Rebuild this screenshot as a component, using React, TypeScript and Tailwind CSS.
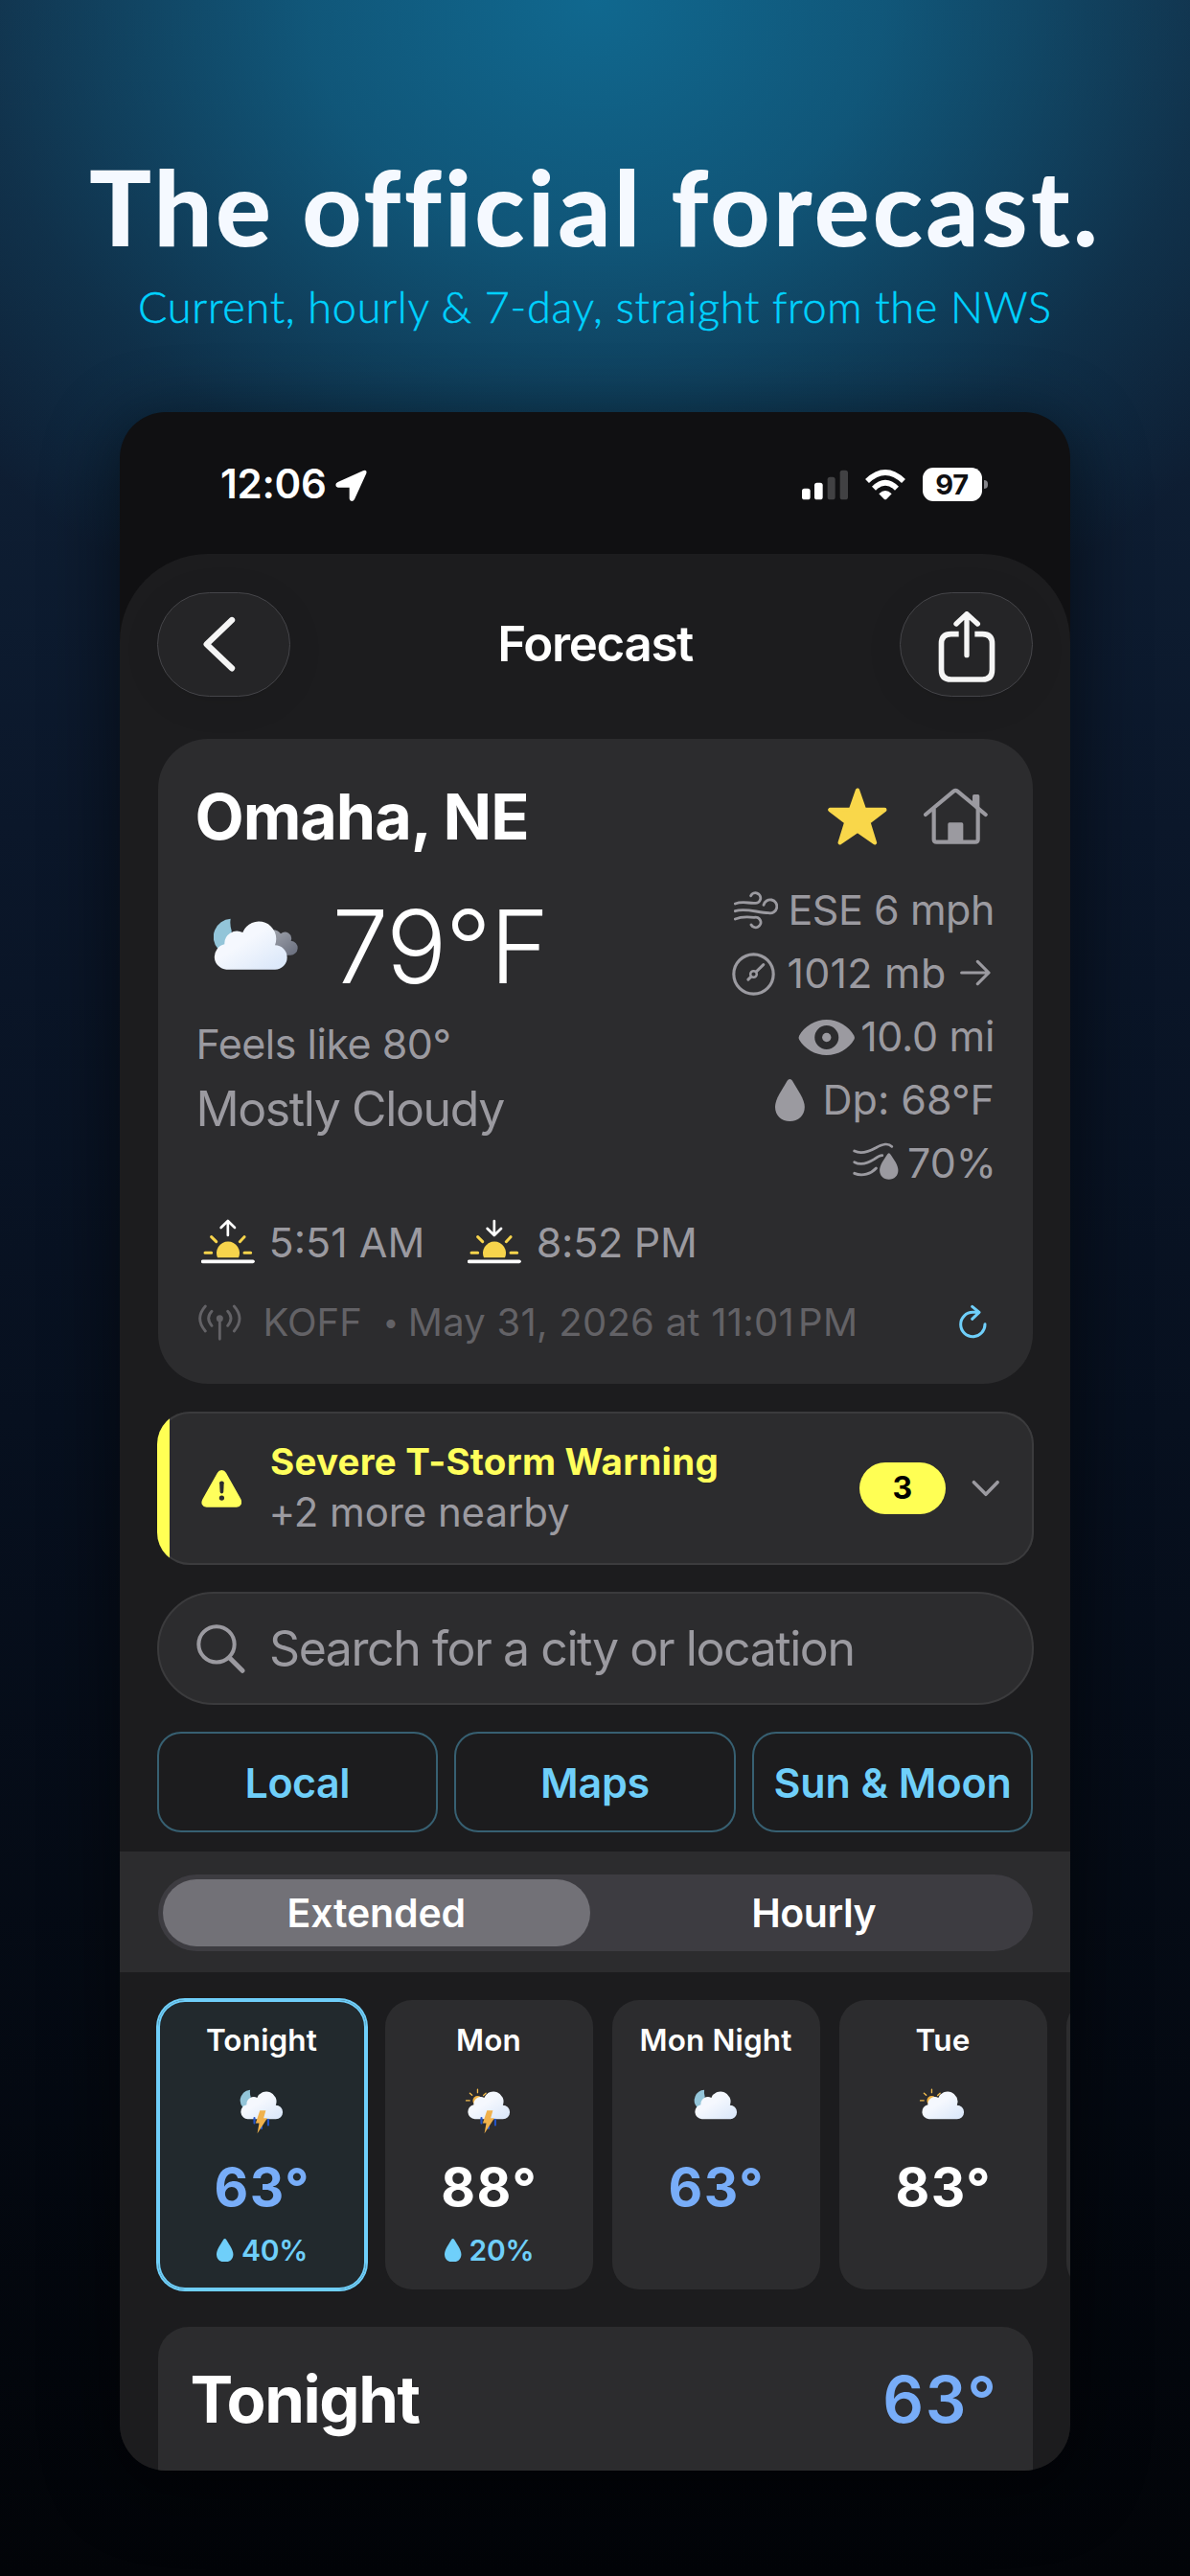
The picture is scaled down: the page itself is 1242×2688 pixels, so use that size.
import type { ReactNode } from "react";

const CLOUD =
  "M256 756 A40 40 0 0 1 250 677 A39 39 0 0 1 307 640 A54 54 0 0 1 408 680 A38 38 0 0 1 408 756 Z";
const MOON = "M269 597 A57 57 0 0 0 230 692 H272 V634 Q266 616 269 597 Z";

function CloudGradient({ id }: { id: string }) {
  return (
    <linearGradient id={id} gradientUnits="userSpaceOnUse" x1="280" y1="630" x2="370" y2="770">
      <stop offset="0.3" stopColor="#f5f8fe" />
      <stop offset="1" stopColor="#dde9fa" />
    </linearGradient>
  );
}

function MostlyCloudyNight() {
  return (
    <svg className="h-[53.7px] w-[88px]" viewBox="216 595 264 161">
      <defs>
        <CloudGradient id="cloud-main" />
        <linearGradient id="cloud-dark" gradientUnits="userSpaceOnUse" x1="400" y1="635" x2="460" y2="715">
          <stop offset="0" stopColor="#9ea2ab" />
          <stop offset="1" stopColor="#6c7180" />
        </linearGradient>
      </defs>
      <path
        d="M390 711 V634 A32 32 0 0 1 426 644 A20 20 0 0 1 458 666 A22.500 22.500 0 0 1 455 711 Z"
        fill="url(#cloud-dark)"
      />
      <path d={MOON} fill="#93c5d9" />
      <path d={CLOUD} fill="url(#cloud-main)" />
    </svg>
  );
}

function SkyIcon({ id, night, storm }: { id: string; night?: boolean; storm?: boolean }) {
  return (
    <svg className="h-[48.5px] w-[50px] shrink-0" viewBox="201 588 260 252">
      <defs>
        <CloudGradient id={id} />
      </defs>
      {night ? (
        <path d={MOON} fill="#93c5d9" />
      ) : (
        <g stroke="#f3bc4c" strokeWidth="7" strokeLinecap="round">
          <circle cx="271" cy="656" r="26" fill="#f3b545" stroke="none" />
          <path d="M271 594V612M229 615l12 11M316 615l-13 12M209 655h19" />
        </g>
      )}
      <path d={CLOUD} fill={`url(#${id})`} />
      {storm && (
        <>
          <path
            d="M292 750V778M367 758V788M331 796V806"
            stroke="#2453c4"
            strokeWidth="11"
            strokeLinecap="round"
          />
          <path d="M322 709H354L342 750H362L308 834L318 778H299Z" fill="#f0b14c" />
        </>
      )}
    </svg>
  );
}

function Droplet({ className }: { className: string }) {
  return (
    <svg className={className} viewBox="387 1035 93 132" fill="currentColor" preserveAspectRatio="none">
      <path d="M433 1035Q438 1035 441 1040L466 1082C474 1096 479.500 1111 479.500 1122C479.500 1150 459 1167 433 1167C407 1167 387 1150 387 1122C387 1111 392 1096 400 1082L425 1040Q428 1035 433 1035Z" />
    </svg>
  );
}

function StatusBar() {
  return (
    <div className="flex h-[148px] items-start pt-[51px] pr-[86.5px] pl-[105px] text-white">
      <span className="text-[42px] leading-[48px] font-semibold tracking-[-0.26px]">12:06</span>
      <svg className="mt-[8.5px] ml-[9px] h-[33px] w-[33px]" viewBox="688 208 99 99" fill="#fff">
        <path d="M776 211Q788 207 785 220L748 301Q745 307 739 307Q732 306 732 299V264H696Q689 262 689 256Q689 250 696 247Z" />
      </svg>
      <svg className="mt-[9px] ml-auto h-[32px] w-[108px]" viewBox="649 208 324 96">
        <g fill="#fff">
          <rect x="649" y="267" width="26" height="35" rx="8" />
          <rect x="688" y="249" width="26" height="53" rx="8" />
        </g>
        <g fill="#414143">
          <rect x="729" y="231" width="24" height="71" rx="8" />
          <rect x="768" y="210" width="25" height="92" rx="8" />
        </g>
        <g fill="none" stroke="#fff" strokeWidth="17">
          <path d="M853 244Q910 190 967 244" />
          <path d="M874 267Q910 231 946 267" />
        </g>
        <path d="M890 284Q910 264 930 284L914 300Q910 304 906 300Z" fill="#fff" />
      </svg>
      <div className="mt-[7px] ml-[18px] flex h-[34.5px] w-[62px] items-center justify-center rounded-[11px] bg-white text-[29px] leading-none font-bold tracking-[-0.3px] text-[#101012]">
        97
      </div>
      <div className="mt-[19.5px] ml-[2.5px] h-[9px] w-[3.5px] rounded-r-full bg-[#85858a]" />
    </div>
  );
}

function GlassButton({ children }: { children: ReactNode }) {
  return (
    <button className="flex h-[109px] w-[139px] items-center justify-center rounded-full border-[1.5px] border-[#454549] bg-[#252527] shadow-[0_6px_40px_rgba(0,0,0,0.08)]">
      {children}
    </button>
  );
}

function NavBar() {
  return (
    <div className="flex h-[192.700px] items-start justify-between px-[39px] pt-[39.500px]">
      <GlassButton>
        <svg className="mr-[9px] h-[58px] w-[34px]" viewBox="277 670 102 174" fill="none">
          <path
            d="M367 682L288 757.500L367 833"
            stroke="#f5f5f5"
            strokeWidth="19"
            strokeLinecap="round"
            strokeLinejoin="round"
          />
        </svg>
      </GlassButton>
      <h2 className="mt-[24.500px] text-[51px] leading-[60px] font-semibold tracking-[-1.31px] text-white">
        Forecast
      </h2>
      <GlassButton>
        <svg
          className="mt-[5px] h-[74px] w-[60px]"
          viewBox="1076 653 180 222"
          fill="none"
          stroke="#f5f5f5"
          strokeWidth="16"
          strokeLinecap="round"
          strokeLinejoin="round"
        >
          <path
            strokeLinecap="butt"
            strokeWidth="17"
            d="M1141 724H1117Q1086.500 724 1086.500 754V835Q1086.500 866 1117 866H1215Q1245.500 866 1245.500 835V754Q1245.500 724 1215 724H1191"
          />
          <path d="M1166 790V664M1133 692L1166 661L1200 692" />
        </svg>
      </GlassButton>
    </div>
  );
}

function SunEvent({ down }: { down?: boolean }) {
  return (
    <svg className="h-[47px] w-[56px]" viewBox="178 157 168 141" fill="none" strokeLinecap="round" strokeLinejoin="round">
      <path d="M229 278A36 36 0 1 1 295 278Z" fill="#f7d44c" />
      <path d="M190 263H210M313 263H333M210 213L225 228M313 213L299 228" stroke="#f7d44c" strokeWidth="9" />
      <path d="M183 290H340" stroke="#fff" strokeWidth="11" />
      <path
        d={down ? "M261.500 163V206M240 187L261.500 208L283 187" : "M261.500 208V166M240 184L261.500 163L283 184"}
        stroke="#fff"
        strokeWidth="8"
      />
    </svg>
  );
}

function CurrentConditions() {
  return (
    <section className="h-[673.700px] rounded-[52px] bg-[#2c2c2e] pt-[41px] pr-[39.500px] pl-[40px] text-[43px] leading-[52px] text-[#9b9aa0]">
      <div className="flex h-[80px] items-start">
        <h1 className="-ml-px text-[66.500px] leading-[80px] font-bold tracking-[-1.06px] text-white">Omaha, NE</h1>
        <svg className="mt-[10px] ml-auto h-[60px] w-[62px]" viewBox="554 126 186 180">
          <path
            d="M647 134L668 194L732 195L681 234L701 298L647 260L592 298L612 234L561 195L626 194Z"
            fill="#f9d74a"
            stroke="#f9d74a"
            strokeWidth="13"
            strokeLinejoin="round"
          />
        </svg>
        <svg className="mt-[10px] mr-[7.500px] ml-[37.500px] h-[60px] w-[67px]" viewBox="851 126 201 180" fill="none" stroke="#9b9aa0">
          <path d="M857 210L945 137Q951 132 957 137L1045 210" strokeWidth="12.500" strokeLinecap="round" />
          <path d="M883 192V288Q883 296 892 296H1012Q1021 296 1021 288V192" strokeWidth="12.500" />
          <path d="M927 298V240Q927 235 932 235H970Q975 235 975 240V298ZM1004 176V152Q1004 147 1009 147H1021Q1026 147 1026 152V196Z" fill="#9b9aa0" stroke="none" />
        </svg>
      </div>

      <div className="flex h-[354.500px] justify-between">
        <div className="pt-[36px]">
          <div className="flex h-[120px] items-center">
            <div className="mt-[-6px] ml-[18px]">
              <MostlyCloudyNight />
            </div>
            <span className="ml-[36px] text-[105.500px] leading-[120px] font-light tracking-[-1.59px] text-white">
              79°F
            </span>
          </div>
          <p className="mt-[15.500px] tracking-[-0.49px]">Feels like 80°</p>
          <p className="mt-[12px] text-[50px] leading-[60px] tracking-[-1.4px]">Mostly Cloudy</p>
        </div>

        <div className="flex flex-col items-end pt-[24.500px] leading-[66px]">
          <div className="flex h-[66px] items-center">
            <svg
              className="mt-[2px] mr-[10.500px] h-[40px] w-[46px]"
              viewBox="257 450 138 120"
              fill="none"
              stroke="currentColor"
              strokeWidth="8.500"
              strokeLinecap="round"
            >
              <path d="M261 489C284 480 303 488 322 487A16 16 0 1 0 310 464" />
              <path d="M261 512C292 501 330 517 366 518A21 21 0 1 0 350 493" />
              <path d="M261 537C282 528 302 530 320 532A16 16 0 1 1 311 555" />
            </svg>
            <span className="tracking-[-0.44px]">ESE 6 mph</span>
          </div>
          <div className="flex h-[66px] items-center">
            <svg className="mt-[2px] mr-[12.500px] h-[45px] w-[45px]" viewBox="251 640 136 136" fill="none" stroke="currentColor">
              <circle cx="319" cy="708" r="62.500" strokeWidth="9.500" />
              <path d="M302 725L350 678" strokeWidth="9" strokeLinecap="round" />
              <circle cx="319" cy="708" r="10" strokeWidth="7.500" fill="#2c2c2e" />
            </svg>
            <span className="tracking-[0.22px]">1012 mb</span>
            <svg
              className="mt-[-1px] mr-[4px] ml-[14.500px] h-[28px] w-[32px]"
              viewBox="966 664 96 84"
              fill="none"
              stroke="currentColor"
              strokeWidth="9.500"
              strokeLinecap="round"
              strokeLinejoin="round"
            >
              <path d="M971 706H1055M1021 671L1056 706L1021 741" />
            </svg>
          </div>
          <div className="flex h-[66px] items-center">
            <svg className="mt-[2px] mr-[5.500px] h-[37px] w-[59.500px]" viewBox="459 849 178 111" fill="currentColor">
              <path
                fillRule="evenodd"
                d="M462 911Q459 905 462 899C478 870 512 849 548 849C584 849 618 870 634 899Q637 905 634 911C618 939 584 960 548 960C512 960 478 939 462 911ZM548 867A37.500 37.500 0 1 0 548 942A37.500 37.500 0 1 0 548 867Z"
              />
              <circle cx="548" cy="904.500" r="14" />
            </svg>
            <span className="tracking-[-0.33px]">10.0 mi</span>
          </div>
          <div className="flex h-[66px] items-center">
            <Droplet className="mt-[1px] mr-[18.500px] h-[44px] w-[31px]" />
            <span>Dp: 68°F</span>
          </div>
          <div className="mr-[-2px] flex h-[66px] items-center">
            <svg
              className="mt-[-4px] mr-[9px] h-[39px] w-[47.500px]"
              viewBox="632 1236 142 117"
              fill="none"
              stroke="currentColor"
              strokeWidth="8.500"
              strokeLinecap="round"
            >
              <path d="M637 1263C660 1275 684 1264 704 1253C724 1241 744 1238 754 1249" />
              <path d="M637 1298C660 1310 683 1299 700 1288C710 1281 718 1277 724 1277" />
              <path d="M637 1333C662 1344 690 1334 705 1317" />
              <path
                d="M745 1270Q748 1270 751 1275L766 1298C771 1307 774 1316 774 1323C774 1341 762 1352 745 1352C728 1352 716 1341 716 1323C716 1316 719 1307 724 1298L739 1275Q742 1270 745 1270Z"
                fill="currentColor"
                stroke="none"
              />
            </svg>
            <span>70%</span>
          </div>
        </div>
      </div>

      <div className="mt-[24px] flex h-[52px] items-start">
        <div className="mt-[1.500px] mr-[15px] ml-[5px]">
          <SunEvent />
        </div>
        <span>5:51 AM</span>
        <div className="mt-[1.500px] mr-[15.500px] ml-[45px]">
          <SunEvent down />
        </div>
        <span className="tracking-[-0.27px]">8:52 PM</span>
      </div>

      <div className="mt-[33px] flex h-[50px] items-start text-[40px] leading-[50px] text-[#636266]">
        <svg
          className="mt-[6px] ml-[2.500px] h-[38px] w-[45px]"
          viewBox="170 424 135 114"
          fill="none"
          stroke="currentColor"
          strokeWidth="8.500"
          strokeLinecap="round"
        >
          <circle cx="237" cy="468" r="10.500" fill="currentColor" stroke="none" />
          <path d="M237 470V533M212 446Q192 467 212 491M262 446Q282 467 262 491M192 430Q158 468 192 508M282 430Q316 468 282 508" />
        </svg>
        <span className="ml-[22.500px]">KOFF</span>
        <span className="ml-[20px] w-[20px] text-center text-[29px]">•</span>
        <span className="ml-[8px] tracking-[0.25px]">May 31, 2026 at 11:01</span>
        <span className="ml-[4px] tracking-[0.5px]">PM</span>
        <svg
          className="mt-[6px] mr-[8px] ml-auto h-[36px] w-[30px]"
          viewBox="1202 366 90 108"
          fill="none"
          stroke="#6fcffa"
          strokeWidth="9"
          strokeLinecap="round"
          strokeLinejoin="round"
        >
          <path d="M1286 428A38 38 0 1 1 1248 391H1266M1246 373L1268 391L1246 412" />
        </svg>
      </div>
    </section>
  );
}

function AlertBanner() {
  return (
    <section className="mt-[28.500px] flex h-[160.500px] items-center overflow-hidden rounded-[34px] bg-[#2c2c2e] pr-[35px] shadow-[inset_0_0_0_2px_#3b3b3d]">
      <div className="h-full w-[13px] bg-[#ffff54]" />
      <svg className="mt-[1px] ml-[33px] h-[39px] w-[42.500px]" viewBox="180 941 127 118">
        <path
          d="M244 941Q253 941 258 950L304 1032Q309 1042 305 1050Q301 1058 291 1058H196Q186 1058 182 1050Q178 1042 184 1032L230 950Q235 941 244 941Z"
          fill="#ffff5c"
        />
        <path d="M237 981Q237 976 244 976Q251 976 251 981L249.500 1010Q249 1015 244 1015Q239 1015 238.500 1010Z" fill="#2c2c2e" />
        <circle cx="244" cy="1029" r="8" fill="#2c2c2e" />
      </svg>
      <div className="mt-[-3px] ml-[30px]">
        <p className="text-[38.500px] leading-[50px] font-bold tracking-[0.24px] text-[#ffff5c]">Severe T-Storm Warning</p>
        <p className="mt-[2px] ml-[-1.500px] text-[42px] leading-[52px] tracking-[-0.1px] text-[#9b9aa0]">
          +2 more nearby
        </p>
      </div>
      <div className="ml-auto flex h-[53.500px] w-[89.500px] items-center justify-center rounded-full bg-[#ffff54] text-[32px] font-bold text-black">
        3
      </div>
      <svg
        className="ml-[27.500px] h-[18px] w-[29.500px]"
        viewBox="1243 913 88 54"
        fill="none"
        stroke="#9b9aa0"
        strokeWidth="10.500"
        strokeLinecap="round"
        strokeLinejoin="round"
      >
        <path d="M1250 921L1287.500 959L1324 921" />
      </svg>
    </section>
  );
}

function SearchField() {
  return (
    <div className="mt-[27.500px] flex h-[118.500px] items-center rounded-full border-2 border-[#3b3b3d] bg-[#2c2c2e] pl-[39px]">
      <svg className="mt-[1px] h-[51px] w-[51px]" viewBox="252 166 153 153" fill="none" stroke="#9b9aa0" strokeLinecap="round">
        <circle cx="315" cy="228.500" r="56" strokeWidth="12" />
        <path d="M356 271L396 311" strokeWidth="15" />
      </svg>
      <span className="ml-[25.500px] text-[50px] leading-[60px] tracking-[-1.44px] text-[#9b9aa0]">
        Search for a city or location
      </span>
    </div>
  );
}

function Shortcut({ label, tracking }: { label: string; tracking: string }) {
  return (
    <button
      className={`flex h-[105.5px] items-center justify-center rounded-[25px] border-[2.500px] border-[#376072] text-[43px] leading-[52px] font-semibold text-[#6fcffa] ${tracking}`}
    >
      {label}
    </button>
  );
}

type Period = { name: string; temp: string; night?: boolean; storm?: boolean; rain?: string };

const PERIODS: Period[] = [
  { name: "Tonight", temp: "63°", night: true, storm: true, rain: "40%" },
  { name: "Mon", temp: "88°", storm: true, rain: "20%" },
  { name: "Mon Night", temp: "63°", night: true },
  { name: "Tue", temp: "83°" },
];

function PeriodCard({ period, selected }: { period: Period; selected: boolean }) {
  return (
    <div
      className={`flex h-[302px] w-[217px] shrink-0 flex-col items-center rounded-[28px] pt-[23.500px] ${
        selected
          ? "bg-[#22292d] shadow-[0_0_0_2px_#6fcffa,inset_0_0_0_2px_#6fcffa]"
          : "bg-[#2c2c2e]"
      }`}
    >
      <span className="text-[31.500px] leading-[38px] font-semibold tracking-[0.15px] text-white">{period.name}</span>
      <div className="h-[101px] pt-[31px]">
        <SkyIcon id={`sky-${period.name.replace(" ", "-")}`} night={period.night} storm={period.storm} />
      </div>
      <span
        className={`pl-[1.500px] text-[55px] leading-[66px] font-bold tracking-[1.45px] ${
          period.night ? "text-[#78adf8]" : "text-white"
        }`}
      >
        {period.temp}
      </span>
      {period.rain && (
        <div className="mt-[14.500px] flex h-[36px] items-center gap-[8px] pl-[1.500px] text-[#6fcffa]">
          <Droplet className="h-[24.500px] w-[17.500px]" />
          <span className="text-[30px] leading-[36px] font-semibold tracking-[-0.24px]">{period.rain}</span>
        </div>
      )}
    </div>
  );
}

export default function App() {
  return (
    <div className="h-[2688px] w-[1242px] overflow-hidden bg-[radial-gradient(ellipse_860px_720px_at_50%_0,#10688f_0%,rgba(16,104,143,0.74)_35%,rgba(16,104,143,0.22)_75%,rgba(16,104,143,0)_100%),linear-gradient(180deg,#12253b_0%,#0e1e33_18%,#0b172a_32%,#07101f_55%,#020408_100%)] font-['Inter','Liberation_Sans',sans-serif]">
      <header className="flex h-[430px] flex-col items-center pt-[155px] font-['Lato','Open_Sans',sans-serif] whitespace-nowrap">
        <p className="text-[108px] leading-[120px] font-black tracking-[3.25px] text-[#f5f9ff]">The official forecast.</p>
        <p className="mt-[14.500px] text-[45px] leading-[60px] font-light tracking-[0.73px] text-[#00d2ff] [-webkit-text-stroke:0.5px_#00d2ff]">
          Current, hourly &amp; 7-day, straight from the NWS
        </p>
      </header>

      <main className="ml-[125px] h-[2148px] w-[992px] overflow-hidden rounded-[48px] bg-[#101012] whitespace-nowrap shadow-[0_16px_70px_10px_rgba(0,0,0,0.45)]">
        <StatusBar />
        <div className="h-[2000px] rounded-t-[92px] bg-[#1c1c1e]">
          <NavBar />
          <div className="px-[39.500px]">
            <CurrentConditions />
          </div>
          <div className="px-[38.500px]">
            <AlertBanner />
            <SearchField />
            <div className="mt-[27.5px] grid grid-cols-3 gap-[17px]">
              <Shortcut label="Local" tracking="tracking-[-0.49px]" />
              <Shortcut label="Maps" tracking="tracking-[-0.23px]" />
              <Shortcut label="Sun & Moon" tracking="tracking-[-0.07px]" />
            </div>
          </div>

          <div className="mt-[19.3px] h-[126px] bg-[#2c2c2e] px-[39.500px] pt-[24.500px]">
            <div className="flex h-[79.500px] rounded-full bg-[#3d3c41] text-[41px] leading-[48px] font-semibold text-white">
              <div className="flex w-1/2 p-[5px]">
                <div className="flex w-full items-center justify-center rounded-full bg-[#727177] pt-px tracking-[-0.15px]">
                  Extended
                </div>
              </div>
              <div className="flex w-1/2 items-center justify-center pt-px tracking-[-0.45px]">Hourly</div>
            </div>
          </div>

          <div className="mt-[29.2px] flex gap-[20px] pl-[39.500px]">
            {PERIODS.map((period, index) => (
              <PeriodCard key={period.name} period={period} selected={index === 0} />
            ))}
            <div className="h-[302px] w-[217px] shrink-0 rounded-[28px] bg-[#2c2c2e]" />
          </div>

          <div className="mx-[39.500px] mt-[39px] flex h-[200px] items-start justify-between rounded-t-[32px] bg-[#2c2c2e] pt-[36.500px] pr-[36px] pl-[34px] text-[67px] leading-[80px]">
            <span className="font-bold tracking-[-1.41px] text-white">Tonight</span>
            <span className="font-semibold tracking-[1.57px] text-[#78adf8]">63°</span>
          </div>
        </div>
      </main>
    </div>
  );
}
